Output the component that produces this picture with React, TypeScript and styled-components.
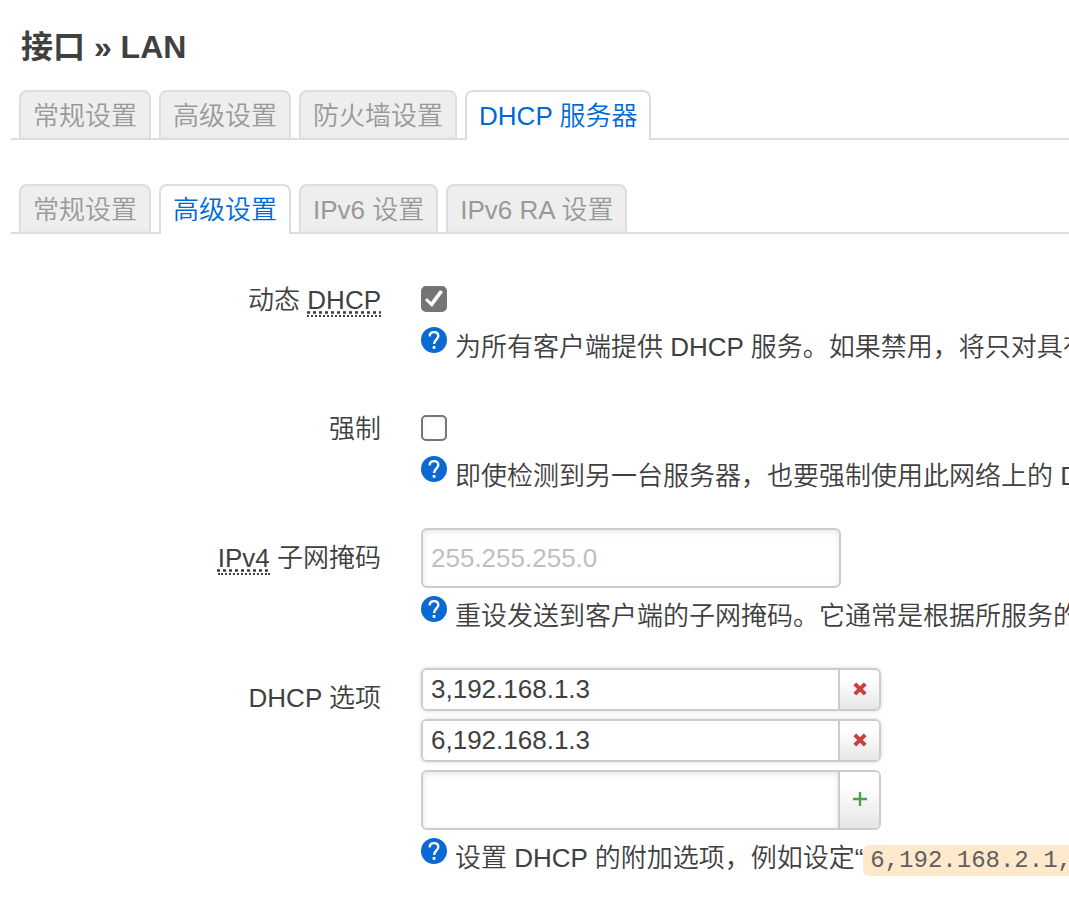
import React, { useId, useState } from "react";
import styled, { createGlobalStyle } from "styled-components";

const GlobalStyle = createGlobalStyle`
  *, *::before, *::after { box-sizing: border-box; }
  body {
    margin: 0;
    background: #fff;
    color: #404040;
    font-family: "Liberation Sans", "Noto Sans CJK SC", sans-serif;
    font-size: 26px;
    font-weight: 350;
    line-height: 36px;
    overflow-x: hidden;
  }
`;

const Page = styled.main`
  padding: 29px 0 32px 11px;
  overflow: hidden;
`;

const Title = styled.h1`
  margin: 0 0 25px 10px;
  font-size: 32px;
  font-weight: 700;
  line-height: 36px;
`;

const TabList = styled.nav`
  display: flex;
  gap: 8px;
  margin-bottom: 44px;
  padding-left: 8px;
  box-shadow: inset 0 -2px 0 #ddd;
`;

const Tab = styled.a<{ $active: boolean }>`
  height: 50px;
  padding: 6px 12px;
  border: 2px solid #ddd;
  border-bottom-width: ${(p) => (p.$active ? 0 : "2px")};
  border-radius: 8px 8px 0 0;
  background: ${(p) =>
    p.$active ? "#fff" : "linear-gradient(#eee 42px, #e8e8e8 46px)"};
  color: ${(p) => (p.$active ? "#0069d6" : "#999")};
  text-decoration: none;
  white-space: nowrap;
`;

const Form = styled.form`
  display: flex;
  flex-direction: column;
  gap: 32px;
  margin-top: -8px;
`;

const Row = styled.div`
  display: flex;
  gap: 40px;
`;

const Label = styled.label`
  flex: 0 0 370px;
  padding-top: 12px;
  text-align: right;
`;

const Abbr = styled.abbr`
  border-bottom: 2px dotted #404040;
  text-decoration: underline dotted;
`;

const Field = styled.div`
  display: flex;
  flex: 1;
  flex-direction: column;
  align-items: flex-start;
  gap: 8px;
  min-width: 0;
`;

const Checkbox = styled.input`
  appearance: none;
  width: 26px;
  height: 26px;
  margin: 16px 0 7px;
  border: 2px solid #767676;
  border-radius: 5px;
  background: #fff;
  box-shadow: inset 0 2px 6px rgba(0, 0, 0, 0.05);

  &:checked {
    background: #767676;
  }

  &:checked::before {
    content: "";
    display: block;
    height: 22px;
    background: #fff;
    clip-path: polygon(2px 12px, 4px 10px, 8px 14px, 17px 2px, 20px 4px, 9px 19px);
  }
`;

const Help = styled.p`
  display: flex;
  gap: 8px;
  margin: 0;
  white-space: nowrap;
`;

const HelpText = styled.span`
  padding: 2px 0;
`;

const Icon = styled.svg`
  display: block;
  flex: none;
`;

const TextInput = styled.input`
  width: 420px;
  height: 60px;
  padding: 0 8px;
  border: 2px solid #ccc;
  border-radius: 6px;
  background: #fff;
  box-shadow: inset 0 2px 6px rgba(0, 0, 0, 0.1);
  color: #404040;
  font: inherit;
  outline: none;

  &::placeholder {
    color: #bfbfbf;
    opacity: 1;
  }
`;

const List = styled.div`
  display: flex;
  flex-direction: column;
  gap: 8px;
`;

const ListItem = styled.div<{ $tall?: boolean }>`
  display: flex;
  width: 460px;
  height: ${(p) => (p.$tall ? "60px" : "43px")};
  border: 2px solid #ccc;
  border-radius: 6px;
  overflow: hidden;
  box-shadow: ${(p) => (p.$tall ? "none" : "0 0 4px rgba(0, 0, 0, 0.15)")};
`;

const ItemInput = styled.input<{ $inset?: boolean }>`
  flex: 1;
  min-width: 0;
  padding: 0 8px 2px;
  border: 0;
  background: #fff;
  box-shadow: ${(p) => (p.$inset ? "inset 0 2px 6px rgba(0, 0, 0, 0.1)" : "none")};
  color: #404040;
  font: inherit;
  outline: none;
`;

const ItemButton = styled.button`
  display: flex;
  flex: 0 0 41px;
  align-items: center;
  justify-content: center;
  padding: 0 0 2px;
  border: 0;
  border-left: 2px solid #ccc;
  background: linear-gradient(#fff, #fff 25%, #e6e6e6);
`;

const Code = styled.code`
  padding: 2px 7px;
  border-radius: 6px;
  background: #fee9cc;
  color: #606060;
  font-family: "Liberation Mono", monospace;
  font-size: 24px;
`;

const HelpIcon = () => (
  <Icon width="26" height="26" viewBox="0 0 26 26" aria-hidden="true">
    <circle cx="13" cy="13" r="13" fill="#0b69d4" />
    <path
      d="M8.600 9.400C8.700 6.600 10.500 5.100 13 5.100c2.600 0 4.300 1.500 4.300 3.800 0 3.200-4.200 3.800-4.200 8.100"
      fill="none"
      stroke="#fff"
      strokeWidth="2.400"
    />
    <rect x="11.700" y="19" width="2.700" height="2.800" fill="#fff" />
  </Icon>
);

const RemoveIcon = () => (
  <Icon width="14" height="14" viewBox="0 0 14 14" aria-hidden="true">
    <path d="M1.800 1.800L12.200 12.200M12.200 1.800L1.800 12.200" stroke="#cc4040" strokeWidth="4" />
  </Icon>
);

const AddIcon = () => (
  <Icon width="14" height="14" viewBox="0 0 14 14" aria-hidden="true">
    <path d="M0 7H14M7 0V14" stroke="#46a546" strokeWidth="2.400" />
  </Icon>
);

const Tabs = ({ label, items, active }: { label: string; items: string[]; active: string }) => (
  <TabList aria-label={label}>
    {items.map((item) => (
      <Tab key={item} href="#" $active={item === active} aria-current={item === active || undefined}>
        {item}
      </Tab>
    ))}
  </TabList>
);

type FormRowProps = {
  label: React.ReactNode;
  help: React.ReactNode;
  children: (id: string) => React.ReactNode;
};

const FormRow = ({ label, help, children }: FormRowProps) => {
  const id = useId();
  return (
    <Row>
      <Label htmlFor={id}>{label}</Label>
      <Field>
        {children(id)}
        <Help>
          <HelpIcon />
          <HelpText>{help}</HelpText>
        </Help>
      </Field>
    </Row>
  );
};

export default function App() {
  const [options, setOptions] = useState(["3,192.168.1.3", "6,192.168.1.3"]);
  const [draft, setDraft] = useState("");

  const addOption = () => {
    if (draft) {
      setOptions([...options, draft]);
      setDraft("");
    }
  };

  return (
    <>
      <GlobalStyle />
      <Page lang="zh-CN">
        <Title>接口 » LAN</Title>
        <Tabs
          label="接口"
          items={["常规设置", "高级设置", "防火墙设置", "DHCP 服务器"]}
          active="DHCP 服务器"
        />
        <Tabs
          label="DHCP 服务器"
          items={["常规设置", "高级设置", "IPv6 设置", "IPv6 RA 设置"]}
          active="高级设置"
        />
        <Form onSubmit={(e) => e.preventDefault()}>
          <FormRow
            label={<>动态 <Abbr>DHCP</Abbr></>}
            help="为所有客户端提供 DHCP 服务。如果禁用，将只对具有"
          >
            {(id) => <Checkbox id={id} type="checkbox" defaultChecked />}
          </FormRow>
          <FormRow label="强制" help="即使检测到另一台服务器，也要强制使用此网络上的 DHCP">
            {(id) => <Checkbox id={id} type="checkbox" />}
          </FormRow>
          <FormRow
            label={<><Abbr>IPv4</Abbr> 子网掩码</>}
            help="重设发送到客户端的子网掩码。它通常是根据所服务的"
          >
            {(id) => <TextInput id={id} type="text" placeholder="255.255.255.0" />}
          </FormRow>
          <FormRow
            label="DHCP 选项"
            help={<>设置 DHCP 的附加选项，例如设定“<Code>6,192.168.2.1,</Code></>}
          >
            {(id) => (
              <List>
                {options.map((value, index) => (
                  <ListItem key={value}>
                    <ItemInput type="text" readOnly value={value} aria-label={`DHCP 选项 ${index + 1}`} />
                    <ItemButton
                      type="button"
                      aria-label="删除"
                      onClick={() => setOptions(options.filter((o) => o !== value))}
                    >
                      <RemoveIcon />
                    </ItemButton>
                  </ListItem>
                ))}
                <ListItem $tall>
                  <ItemInput
                    id={id}
                    type="text"
                    $inset
                    value={draft}
                    onChange={(e) => setDraft(e.target.value)}
                  />
                  <ItemButton type="button" aria-label="添加" onClick={addOption}>
                    <AddIcon />
                  </ItemButton>
                </ListItem>
              </List>
            )}
          </FormRow>
        </Form>
      </Page>
    </>
  );
}
